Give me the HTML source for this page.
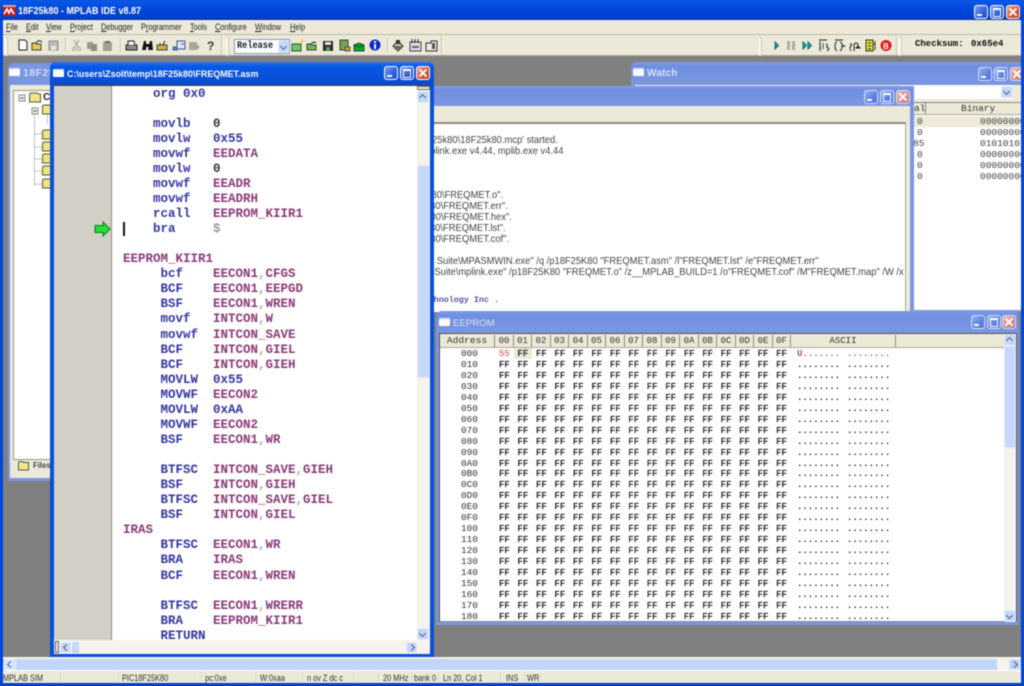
<!DOCTYPE html>
<html><head><meta charset="utf-8"><title>MPLAB IDE</title>
<style>
html,body{margin:0;padding:0;width:1024px;height:686px;overflow:hidden;background:#0048dc}
#root{position:relative;width:1024px;height:686px;overflow:hidden;background:#808080;font-family:"Liberation Sans",sans-serif;filter:blur(.5px)}
.a{position:absolute;display:block}
pre{margin:0;position:absolute;font-family:"Liberation Mono",monospace}
pre i{font-style:normal;color:#8a3a78}
.t{position:absolute;white-space:nowrap}
.b{position:absolute;width:12px;height:12px;border-radius:3px;border:1px solid #fff;box-sizing:content-box;background:linear-gradient(135deg,#7d9ff0,#2f5fdc 60%,#2a52c8);overflow:hidden}
.b.i{background:linear-gradient(135deg,#9db5ef,#5d80e2 60%,#5577dc);border-color:#d3def8}
.b.c{background:linear-gradient(135deg,#f0a08a,#d8502f 60%,#c8401f)}
.b.c.i{background:linear-gradient(135deg,#ecb9b4,#d58a86 60%,#cc7c78)}
.b.mn::after{content:"";position:absolute;left:2px;bottom:2px;width:5px;height:2px;background:#fff}
.b.mx::after{content:"";position:absolute;left:2px;top:2px;width:6px;height:6px;border:1px solid #fff;border-top-width:2px}
.b.c::before,.b.c::after{content:"";position:absolute;left:1px;top:5px;width:10px;height:2px;background:#fff;transform:rotate(45deg)}
.b.c::after{transform:rotate(-45deg)}
.ti{position:absolute;width:11px;height:8px;background:#fff;border-top:2px solid #dfe8fb;border-radius:1px;box-sizing:border-box}
.arrow{position:absolute;background:#c4d6f9;border:1px solid #e7eefc;box-sizing:border-box;border-radius:2px}
.arrow::after{content:"";position:absolute;left:50%;top:50%;width:4px;height:4px;margin:-3px 0 0 -3px;border-left:1.500px solid #4d6185;border-top:1.500px solid #4d6185;box-sizing:content-box}
.up::after{transform:translateY(1px) rotate(45deg)}
.dn::after{transform:rotate(225deg)}
.lf::after{transform:translateX(1px) rotate(-45deg)}
.rt::after{transform:rotate(135deg)}
.sep{position:absolute;width:1px;background:#c4c1b0;border-right:1px solid #f8f7f0}
.grip{position:absolute;width:1px;background:#f5f3ea;border:1px solid #cfccbc;border-left-color:#fff;box-sizing:content-box}
.menu span{position:absolute;top:22px;font-size:8.8px;color:#222;line-height:11px;transform:scaleX(.83);transform-origin:left;white-space:nowrap}
.menu u{text-decoration:underline}
.st{position:absolute;top:673px;font-size:9.2px;color:#333;line-height:11px;white-space:nowrap;transform:scaleX(.8);transform-origin:left}
.ttl{position:absolute;color:#fff;font-weight:bold;white-space:nowrap;transform-origin:left}
.h{position:absolute;top:335px;height:12px;border-right:1px solid #8f8c7c;box-sizing:border-box;text-align:center;font:9px/12px "Liberation Mono",monospace;color:#333}
.o{position:absolute;white-space:nowrap;font-size:10.3px;line-height:11px;color:#444;text-align:right;transform:scaleX(.91);transform-origin:right}
</style></head><body><div id="root">

<!-- main frame -->
<div class="a" style="left:0;top:0;width:1024px;height:20px;background:linear-gradient(#0a5ae8 0,#0a55e4 10%,#0046d8 50%,#0040cc 85%,#0038b8)"></div>
<div class="a" style="left:0;top:20px;width:3px;height:666px;background:#0048dc"></div>
<div class="a" style="left:1021px;top:20px;width:3px;height:666px;background:#0048dc"></div>
<div class="a" style="left:0;top:683px;width:1024px;height:3px;background:#0040c8"></div>
<svg class="a" style="left:3px;top:5px" width="13" height="11" viewBox="0 0 13 11"><rect width="13" height="11" fill="#b82020"/><rect y="0" width="13" height="2" fill="#d8a0a0"/><path d="M1 9 L4 4 L6 8 L8 4 L11 9" stroke="#fff" stroke-width="1.600" fill="none"/></svg>
<div class="ttl" style="left:18px;top:5px;font-size:10px;line-height:13px;transform:scaleX(.9)">18F25k80 - MPLAB IDE v8.87</div>
<div class="b mn" style="left:974px;top:5px"></div>
<div class="b mx" style="left:990px;top:5px"></div>
<div class="b c" style="left:1006px;top:5px"></div>

<!-- menu -->
<div class="a" style="left:3px;top:20px;width:1018px;height:14px;background:#ece9d8"></div>
<div class="menu">
<span style="left:6px"><u>F</u>ile</span><span style="left:26px"><u>E</u>dit</span><span style="left:46px"><u>V</u>iew</span><span style="left:70px"><u>P</u>roject</span><span style="left:101px"><u>D</u>ebugger</span><span style="left:141px">P<u>r</u>ogrammer</span><span style="left:190px"><u>T</u>ools</span><span style="left:215px"><u>C</u>onfigure</span><span style="left:255px"><u>W</u>indow</span><span style="left:290px"><u>H</u>elp</span>
</div>
<!-- toolbar -->
<div class="a" style="left:3px;top:34px;width:1018px;height:22px;background:#ece9d8;border-top:1px solid #bcb9a8;border-bottom:1px solid #aca899;box-sizing:border-box"></div>
<div class="grip" style="left:5px;top:37px;height:17px"></div>
<div class="sep" style="left:65px;top:38px;height:14px"></div>
<div class="sep" style="left:120px;top:38px;height:14px"></div>
<div class="sep" style="left:221px;top:35px;height:20px"></div>
<div class="grip" style="left:226px;top:37px;height:17px"></div>
<div class="sep" style="left:387px;top:38px;height:14px"></div>
<div class="sep" style="left:441px;top:35px;height:20px"></div>
<div class="grip" style="left:759px;top:37px;height:17px"></div>
<div class="sep" style="left:896px;top:35px;height:20px"></div>
<div class="grip" style="left:899px;top:37px;height:17px"></div>
<div class="a" style="left:234px;top:39px;width:56px;height:15px;background:#fff;border:1px solid #7f9db9;box-sizing:border-box"></div>
<div class="t" style="left:237px;top:41px;font:bold 10px/12px 'Liberation Mono',monospace;color:#222;transform:scaleX(.86);transform-origin:left">Release</div>
<div class="arrow dn" style="left:278px;top:40px;width:11px;height:13px"></div>
<svg class="a" style="left:0;top:34px" width="1024" height="22" viewBox="0 34 1024 22">
<!-- new/open/save -->
<path d="M19 40h6l2 2v8h-8z" fill="#fff" stroke="#222"/>
<path d="M32 50v-7h3l1 1h5v6z" fill="#e6c84e" stroke="#444"/><path d="M36 43q3-4 6-1" stroke="#222" fill="none"/>
<rect x="49" y="41" width="9" height="9" fill="#bbb" stroke="#8f8f8f"/><rect x="51" y="46" width="5" height="4" fill="#ece9d8"/>
<!-- cut/copy/paste disabled -->
<path d="M74 40l4 7M79 40l-4 7" stroke="#a9a79a" stroke-width="1.200"/><circle cx="74" cy="49" r="1.600" fill="none" stroke="#a9a79a"/><circle cx="79" cy="49" r="1.600" fill="none" stroke="#a9a79a"/>
<rect x="87" y="42" width="6" height="7" fill="#9e9c90"/><rect x="91" y="44" width="6" height="7" fill="#8f8d81"/>
<rect x="103" y="42" width="9" height="9" fill="#a3a194"/><rect x="105" y="41" width="5" height="2" fill="#6f6e65"/>
<!-- print, find -->
<rect x="126" y="45" width="11" height="5" fill="#8a8a8a" stroke="#222"/><path d="M128 45v-4h6l1 4" fill="#eee" stroke="#222"/>
<path d="M142 50l2-9h2v9zM148 50l2-9h2l1 9z" fill="#111"/><rect x="145" y="44" width="5" height="3" fill="#111"/>
<path d="M157 50v-5h10v5z" fill="#c9b13c" stroke="#444"/><path d="M163 45l2-4M160 45v-2" stroke="#222"/>
<rect x="177" y="41" width="8" height="8" fill="#dfe6f2" stroke="#3a5a8a"/><path d="M173 47h4v3h-4zM181 44h3" stroke="#3a5a8a" fill="#5a8ac0"/>
<rect x="189" y="42" width="8" height="8" fill="#a9a79a"/><path d="M197 44l3 3-3 3z" fill="#a9a79a"/>
<text x="207" y="50" font-family="Liberation Sans" font-weight="bold" font-size="12" fill="#3c3c1c">?</text>
<!-- project -->
<rect x="292" y="44" width="9" height="7" fill="#6fc46a" stroke="#2d5a2d"/><path d="M302 39v5M300 41h5" stroke="#e8d040"/>
<path d="M307 50v-6h3l1 1h5v5z" fill="#78b060" stroke="#2f4f2f"/><path d="M311 44q3-3 5-1" stroke="#222" fill="none"/>
<rect x="323" y="41" width="10" height="10" fill="#2b2b2b"/><rect x="325" y="42" width="6" height="3" fill="#ddd"/><rect x="326" y="47" width="4" height="4" fill="#5a9a5a"/>
<rect x="340" y="40" width="8" height="10" fill="#7aa05a" stroke="#2f4f2f"/><path d="M345 47h5v4h-5z" fill="#c9a020" stroke="#555"/>
<path d="M354 45l5-2 5 2v6h-10z" fill="#12a030" stroke="#0d5520"/><path d="M354 45l5 2 5-2" stroke="#0d5520" fill="none"/>
<circle cx="375" cy="45" r="5.500" fill="#0a28c8"/><rect x="374" y="44" width="2" height="5" fill="#fff"/><rect x="374" y="41" width="2" height="2" fill="#fff"/>
<path d="M393 46l5-5 5 5-5 5z" fill="#c8c5b8" stroke="#333"/><path d="M396 40h4v4h-4z" fill="#333"/><rect x="394" y="46" width="8" height="3" fill="#666"/>
<rect x="410" y="42" width="11" height="9" fill="#dadbe8" stroke="#444"/><path d="M412 39v4M415 39v4M418 39v4" stroke="#333"/><rect x="412" y="46" width="7" height="2" fill="#666"/>
<path d="M426 43h5v-2h6v10h-11z" fill="#e8e8e8" stroke="#333"/><rect x="432" y="43" width="3" height="6" fill="#555"/>
<!-- debug -->
<path d="M775 42l3.500 3.500-3.500 3.500z" fill="#1fa8a0" stroke="#0f6a70"/>
<rect x="787" y="41" width="3" height="9" fill="#b0aea2"/><rect x="792" y="41" width="3" height="9" fill="#b0aea2"/>
<path d="M803 42l3.500 3.500-3.500 3.500zM808 42l3.500 3.500-3.500 3.500z" fill="#1fa8a0" stroke="#0f6a70"/>
<g fill="none" stroke="#222"><path d="M819 40h8M821 42q-2 0-1 3t-1 3q2 0 1 3M826 44q2 1 1 2t1 2-1 3"/><path d="M823 43v6" stroke="#0f6a70"/>
<path d="M835 40h8M837 42q-2 0-2 4t2 5M840 42q2 0 2 4t-2 5"/><path d="M842 46h3" stroke="#0f6a70" stroke-width="2"/>
<path d="M851 51q-2-3 0-5t-1-2M854 51v-4q0-4 2-4t2 3"/><path d="M858 46l2 2-4 0z" fill="#0f6a70"/></g>
<rect x="866" y="40" width="7" height="11" fill="#e8e020" stroke="#333"/><path d="M868 43h3M868 46h3M868 49h3" stroke="#333"/><path d="M873 44h2M875 41v9" stroke="#333"/>
<circle cx="886" cy="45.500" r="5.500" fill="#e01818"/><text x="883" y="49" font-family="Liberation Sans" font-weight="bold" font-size="8" fill="#fff">B</text>
</svg>
<div class="t" style="left:915px;top:38px;font:bold 9px/13px 'Liberation Mono',monospace;color:#111">Checksum:</div>
<div class="t" style="left:971px;top:38px;font:bold 9px/13px 'Liberation Mono',monospace;color:#111">0x65e4</div>

<!-- watch window -->
<div class="a" style="left:631px;top:62px;width:392px;height:250px;background:#7a96df;border-radius:6px 6px 0 0"></div>
<div class="a" style="left:631px;top:62px;width:392px;height:23px;background:linear-gradient(#7d9ce6,#6f8fe0 20%,#7b97e0);border-radius:6px 6px 0 0"></div>
<div class="ti" style="left:633px;top:68px"></div>
<div class="ttl" style="left:647px;top:67px;font-size:10px;line-height:13px;color:#d8e2f8;letter-spacing:.2px">Watch</div>
<div class="b mn i" style="left:978px;top:67px"></div>
<div class="b mx i" style="left:994px;top:67px"></div>
<div class="b c i" style="left:1010px;top:67px"></div>
<div class="a" style="left:1021px;top:62px;width:3px;height:260px;background:#0048dc"></div>
<div class="a" style="left:635px;top:85px;width:386px;height:225px;background:#ece9d8"></div>
<div class="a" style="left:900px;top:85px;width:113px;height:14px;background:#fff"></div>
<div class="arrow dn" style="left:1001px;top:86px;width:12px;height:12px"></div>
<div class="a" style="left:905px;top:102px;width:116px;height:208px;background:#fff;border-top:1px solid #888;box-sizing:border-box"></div>
<div class="a" style="left:905px;top:103px;width:116px;height:12px;background:#ece9d8;border-bottom:1px solid #aca899;box-sizing:border-box"></div>
<div class="a" style="left:925px;top:103px;width:1px;height:12px;background:#8f8c7c"></div>
<div class="t" style="left:914px;top:103px;font:9.5px/12px 'Liberation Mono',monospace;color:#333">al</div>
<div class="t" style="left:961px;top:103px;font:9.5px/12px 'Liberation Mono',monospace;color:#333">Binary</div>
<div class="a" style="left:905px;top:116px;width:116px;height:11px;background:#ece9d8"></div>
<pre style="left:917px;top:116px;font-size:9.5px;line-height:11px;color:#444">0
0
<span style="margin-left:-4px">85</span>
0
0
0</pre>
<pre style="left:980px;top:116px;font-size:9.5px;line-height:11px;color:#444;width:41px;overflow:hidden">00000000
00000000
0101010
00000000
00000000
00000000</pre>

<!-- output window -->
<div class="a" style="left:420px;top:86px;width:494px;height:226px;background:#7a96df;border-radius:0 6px 0 0"></div>
<div class="a" style="left:420px;top:86px;width:494px;height:20px;background:linear-gradient(#7d9ce6,#6f8fe0 20%,#7b97e0)"></div>
<div class="b mn i" style="left:864px;top:90px"></div>
<div class="b mx i" style="left:880px;top:90px"></div>
<div class="b c i" style="left:896px;top:90px"></div>
<div class="a" style="left:424px;top:106px;width:486px;height:206px;background:#ece9d8"></div>
<div class="a" style="left:424px;top:122px;width:482px;height:190px;background:#fff;border-top:2px solid #8f8c7c;border-right:1px solid #aca899;box-sizing:border-box"></div>
<div class="o" style="right:466px;top:135px">Build C:\users\Zsolt\temp\18F25k80\18F25k80.mcp' started.</div>
<div class="o" style="right:461px;top:146px">Language tool versions: mpasmx.exe v5.46, mplink.exe v4.44, mplib.exe v4.44</div>
<div class="o" style="right:521px;top:190px">C:\users\Zsolt\temp\18F25k80\FREQMET.o".</div>
<div class="o" style="right:516px;top:201px">C:\users\Zsolt\temp\18F25k80\FREQMET.err".</div>
<div class="o" style="right:512px;top:212px">C:\users\Zsolt\temp\18F25k80\FREQMET.hex".</div>
<div class="o" style="right:518px;top:223px">C:\users\Zsolt\temp\18F25k80\FREQMET.lst".</div>
<div class="o" style="right:515px;top:234px">C:\users\Zsolt\temp\18F25k80\FREQMET.cof".</div>
<div class="o" style="right:205px;top:255.500px">Suite\MPASMWIN.exe" /q /p18F25K80 "FREQMET.asm" /l"FREQMET.lst" /e"FREQMET.err"</div>
<div class="o" style="right:120px;top:266.500px">Suite\mplink.exe" /p18F25K80 "FREQMET.o" /z__MPLAB_BUILD=1 /o"FREQMET.cof" /M"FREQMET.map" /W /x</div>
<div class="t" style="right:525px;top:294px;font:bold 8.4px/12px 'Liberation Mono',monospace;color:#5555a8">Microchip Technology Inc .</div>

<!-- project window -->
<div class="a" style="left:8px;top:63px;width:60px;height:418px;background:#7a96df;border-radius:6px 6px 0 0"></div>
<div class="ti" style="left:9px;top:68px"></div>
<div class="ttl" style="left:23px;top:67px;font-size:10.5px;line-height:13px;color:#d0dcf6;letter-spacing:.4px">18F25k80.mcw</div>
<div class="a" style="left:10px;top:85px;width:58px;height:393px;background:#ece9d8"></div>
<div class="a" style="left:13px;top:90px;width:50px;height:370px;background:#fff;border:1px solid #9a978a;box-sizing:border-box"></div>
<svg class="a" style="left:13px;top:90px" width="40" height="110" viewBox="13 90 40 110">
<rect x="19" y="95" width="6" height="6" fill="#eee" stroke="#888"/><path d="M20.500 98h3" stroke="#444"/>
<rect x="32" y="108" width="6" height="6" fill="#eee" stroke="#888"/><path d="M33.500 111h3" stroke="#444"/>
<path d="M34.500 114v72M34.500 134h8M34.500 147h8M34.500 159h8M34.500 171h8M34.500 184h8M47.500 115v9" stroke="#888" stroke-dasharray="1 1" fill="none"/>
<path d="M29.500 102v-7q0-2 2-2h6l1 1h2v8z" fill="#f0e480" stroke="#5a5a30"/>
<path d="M42.500 114v-7q0-2 2-2h6v9z" fill="#f0e480" stroke="#5a5a30"/>
<path d="M42.500 139v-7q0-2 2-2h6v9zM42.500 151v-7q0-2 2-2h6v9zM42.500 163v-7q0-2 2-2h6v9zM42.500 175v-7q0-2 2-2h6v9zM42.500 188v-7q0-2 2-2h6v9z" fill="#f0e480" stroke="#5a5a30"/>
</svg>
<div class="t" style="left:43px;top:92px;font:bold 10px/12px 'Liberation Sans',sans-serif;color:#222">C</div>
<svg class="a" style="left:18px;top:459px" width="12" height="13" viewBox="0 0 12 13"><path d="M.5 11V3.500q0-1 1-1h3l1 1h5v7.500z" fill="#f2e682" stroke="#555"/></svg>
<div class="t" style="left:33px;top:460px;font:bold 8.6px/11px 'Liberation Sans',sans-serif;color:#444;transform:scaleX(.9);transform-origin:left">Files</div>

<!-- EEPROM window -->
<div class="a" style="left:436px;top:311px;width:583px;height:314px;background:#7a96df;border-radius:6px 6px 0 0"></div>
<div class="a" style="left:436px;top:311px;width:583px;height:22px;background:linear-gradient(#7d9ce6,#6f8fe0 20%,#7b97e0);border-radius:6px 6px 0 0"></div>
<div class="ti" style="left:439px;top:318px"></div>
<div class="ttl" style="left:453px;top:317px;font-size:9.6px;line-height:13px;color:#d8e2f8;font-weight:normal">EEPROM</div>
<div class="b mn i" style="left:971px;top:315px"></div>
<div class="b mx i" style="left:987px;top:315px"></div>
<div class="b c i" style="left:1002px;top:315px"></div>
<div class="a" style="left:439px;top:333px;width:578px;height:289px;background:#fff;border:1px solid #555;border-bottom-color:#888;box-sizing:border-box"></div>
<div class="a" style="left:440px;top:334px;width:564px;height:14px;background:#ece9d8;border-bottom:1px solid #aca899;box-sizing:border-box"></div>
<div class="h" style="left:440px;width:55px;font-size:9.6px">Address</div>
<div class="h" style="left:495px;width:19px">00</div><div class="h" style="left:514px;width:18px">01</div><div class="h" style="left:532px;width:19px">02</div><div class="h" style="left:551px;width:18px">03</div><div class="h" style="left:569px;width:19px">04</div><div class="h" style="left:588px;width:18px">05</div><div class="h" style="left:606px;width:19px">06</div><div class="h" style="left:625px;width:18px">07</div><div class="h" style="left:643px;width:19px">08</div><div class="h" style="left:662px;width:18px">09</div><div class="h" style="left:680px;width:19px">0A</div><div class="h" style="left:699px;width:18px">0B</div><div class="h" style="left:717px;width:19px">0C</div><div class="h" style="left:736px;width:18px">0D</div><div class="h" style="left:754px;width:19px">0E</div><div class="h" style="left:773px;width:18px">0F</div>
<div class="h" style="left:791px;width:105px">ASCII</div>
<div class="a" style="left:514px;top:348px;width:18px;height:11px;background:#ece9d8"></div>
<pre style="left:461px;top:349px;font-size:9.4px;line-height:10.96px;color:#333">000
010
020
030
040
050
060
070
080
090
0A0
0B0
0C0
0D0
0E0
0F0
100
110
120
130
140
150
160
170
180</pre>
<pre style="left:499px;top:349px;font-size:9px;line-height:10.96px;color:#111;word-spacing:2.27px;-webkit-text-stroke:.2px #111"><span style="color:#c04040;-webkit-text-stroke:0">55</span> FF FF FF FF FF FF FF FF FF FF FF FF FF FF FF
FF FF FF FF FF FF FF FF FF FF FF FF FF FF FF FF
FF FF FF FF FF FF FF FF FF FF FF FF FF FF FF FF
FF FF FF FF FF FF FF FF FF FF FF FF FF FF FF FF
FF FF FF FF FF FF FF FF FF FF FF FF FF FF FF FF
FF FF FF FF FF FF FF FF FF FF FF FF FF FF FF FF
FF FF FF FF FF FF FF FF FF FF FF FF FF FF FF FF
FF FF FF FF FF FF FF FF FF FF FF FF FF FF FF FF
FF FF FF FF FF FF FF FF FF FF FF FF FF FF FF FF
FF FF FF FF FF FF FF FF FF FF FF FF FF FF FF FF
FF FF FF FF FF FF FF FF FF FF FF FF FF FF FF FF
FF FF FF FF FF FF FF FF FF FF FF FF FF FF FF FF
FF FF FF FF FF FF FF FF FF FF FF FF FF FF FF FF
FF FF FF FF FF FF FF FF FF FF FF FF FF FF FF FF
FF FF FF FF FF FF FF FF FF FF FF FF FF FF FF FF
FF FF FF FF FF FF FF FF FF FF FF FF FF FF FF FF
FF FF FF FF FF FF FF FF FF FF FF FF FF FF FF FF
FF FF FF FF FF FF FF FF FF FF FF FF FF FF FF FF
FF FF FF FF FF FF FF FF FF FF FF FF FF FF FF FF
FF FF FF FF FF FF FF FF FF FF FF FF FF FF FF FF
FF FF FF FF FF FF FF FF FF FF FF FF FF FF FF FF
FF FF FF FF FF FF FF FF FF FF FF FF FF FF FF FF
FF FF FF FF FF FF FF FF FF FF FF FF FF FF FF FF
FF FF FF FF FF FF FF FF FF FF FF FF FF FF FF FF
FF FF FF FF FF FF FF FF FF FF FF FF FF FF FF FF</pre>
<pre style="left:797px;top:349px;font-size:9px;line-height:10.96px;color:#111;word-spacing:1.4px;font-weight:bold"><span style="color:#b05050">U....... ........</span>
........ ........
........ ........
........ ........
........ ........
........ ........
........ ........
........ ........
........ ........
........ ........
........ ........
........ ........
........ ........
........ ........
........ ........
........ ........
........ ........
........ ........
........ ........
........ ........
........ ........
........ ........
........ ........
........ ........
........ ........</pre>
<div class="a" style="left:1004px;top:334px;width:12px;height:287px;background:#f4f3ec"></div>
<div class="a" style="left:1004px;top:346px;width:12px;height:102px;background:#c6d7fa;border:1px solid #e3ebfc;box-sizing:border-box"></div>
<div class="arrow up" style="left:1004px;top:334px;width:12px;height:12px"></div>
<div class="arrow dn" style="left:1004px;top:610px;width:12px;height:12px"></div>

<!-- source window -->
<div class="a" style="left:50px;top:62px;width:384px;height:595px;background:#0a4fd8;border-radius:6px 6px 0 0"></div>
<div class="a" style="left:50px;top:62px;width:384px;height:23px;background:linear-gradient(#2a72f0,#0858e4 20%,#0a50d8 75%,#0a4ac8);border-radius:6px 6px 0 0"></div>
<div class="ti" style="left:53px;top:69px"></div>
<div class="ttl" style="left:67px;top:68px;font-size:9.6px;line-height:13px;transform:scaleX(.93)">C:\users\Zsolt\temp\18F25k80\FREQMET.asm</div>
<div class="b mn" style="left:384px;top:66px"></div>
<div class="b mx" style="left:400px;top:66px"></div>
<div class="b c" style="left:416px;top:66px"></div>
<div class="a" style="left:54px;top:85px;width:376px;height:569px;background:#fff;border-top:1px solid #444;box-sizing:border-box"></div>
<div class="a" style="left:54px;top:86px;width:57px;height:554px;background:#d2cfc7"></div>
<div class="a" style="left:111px;top:86px;width:1px;height:554px;background:#8f8c84"></div>
<svg class="a" style="left:94px;top:221px" width="17" height="16" viewBox="0 0 17 16"><path d="M1 4.500h8V1l7 7-7 7v-3.500H1z" fill="#22e030" stroke="#0c7a18"/></svg>
<div class="a" style="left:123px;top:222px;width:1.500px;height:14px;background:#111"></div>
<pre style="left:123px;top:86.500px;font-size:12.5px;line-height:15.06px;font-weight:bold;color:#3636a0">    org 0x0

    movlb   <span style="color:#333">0</span>
    movlw   0x55
    movwf   <i>EEDATA</i>
    movlw   <span style="color:#333">0</span>
    movwf   <i>EEADR</i>
    movwf   <i>EEADRH</i>
    rcall   <i>EEPROM_KIIR1</i>
    bra     <span style="color:#999">$</span>

<i>EEPROM_KIIR1</i>
     bcf    <i>EECON1</i><span style="color:#aaa">,</span><i>CFGS</i>
     BCF    <i>EECON1</i><span style="color:#aaa">,</span><i>EEPGD</i>
     BSF    <i>EECON1</i><span style="color:#aaa">,</span><i>WREN</i>
     movf   <i>INTCON</i><span style="color:#aaa">,</span><i>W</i>
     movwf  <i>INTCON_SAVE</i>
     BCF    <i>INTCON</i><span style="color:#aaa">,</span><i>GIEL</i>
     BCF    <i>INTCON</i><span style="color:#aaa">,</span><i>GIEH</i>
     MOVLW  0x55
     MOVWF  <i>EECON2</i>
     MOVLW  0xAA
     MOVWF  <i>EECON2</i>
     BSF    <i>EECON1</i><span style="color:#aaa">,</span><i>WR</i>

     BTFSC  <i>INTCON_SAVE</i><span style="color:#aaa">,</span><i>GIEH</i>
     BSF    <i>INTCON</i><span style="color:#aaa">,</span><i>GIEH</i>
     BTFSC  <i>INTCON_SAVE</i><span style="color:#aaa">,</span><i>GIEL</i>
     BSF    <i>INTCON</i><span style="color:#aaa">,</span><i>GIEL</i>
<i>IRAS</i>
     BTFSC  <i>EECON1</i><span style="color:#aaa">,</span><i>WR</i>
     BRA    <i>IRAS</i>
     BCF    <i>EECON1</i><span style="color:#aaa">,</span><i>WREN</i>

     BTFSC  <i>EECON1</i><span style="color:#aaa">,</span><i>WRERR</i>
     BRA    <i>EEPROM_KIIR1</i>
     RETURN</pre>
<div class="a" style="left:417px;top:86px;width:13px;height:554px;background:#f4f3ec"></div>
<div class="a" style="left:417px;top:86px;width:13px;height:4px;background:#ece9d8;border:1px solid #777;box-sizing:border-box"></div>
<div class="a" style="left:417px;top:165px;width:13px;height:213px;background:#c6d7fa;border:1px solid #e3ebfc;box-sizing:border-box"></div>
<div class="arrow up" style="left:417px;top:91px;width:12px;height:12px"></div>
<div class="arrow dn" style="left:417px;top:628px;width:12px;height:12px"></div>
<div class="a" style="left:54px;top:640px;width:376px;height:14px;background:#f4f3ec"></div>
<div class="a" style="left:55px;top:641px;width:4px;height:12px;background:#ece9d8;border:1px solid #666;box-sizing:border-box"></div>
<div class="arrow lf" style="left:60px;top:642px;width:11px;height:11px"></div>
<div class="a" style="left:72px;top:642px;width:7px;height:11px;background:#c6d7fa"></div>
<div class="arrow rt" style="left:406px;top:642px;width:11px;height:11px"></div>

<!-- bottom scrollbar -->
<div class="a" style="left:3px;top:657px;width:1018px;height:2px;background:#f5f3ea"></div>
<div class="a" style="left:3px;top:659px;width:1018px;height:11px;background:#c3d6fa"></div>
<div class="a" style="left:997px;top:659px;width:12px;height:11px;background:#f4f3ec"></div>
<div class="arrow lf" style="left:4px;top:659px;width:12px;height:11px;background:#d6e2fa"></div>
<div class="arrow rt" style="left:1009px;top:659px;width:11px;height:11px;background:#b9cdf7"></div>

<!-- status bar -->
<div class="a" style="left:3px;top:670px;width:1018px;height:13px;background:#ece9d8;border-top:1px solid #fff;box-sizing:border-box"></div>
<div class="st" style="left:3px">MPLAB SIM</div>
<div class="st" style="left:122px">PIC18F25K80</div>
<div class="st" style="left:205px">pc:0xe</div>
<div class="st" style="left:260px">W:0xaa</div>
<div class="st" style="left:307px">n ov Z dc c</div>
<div class="st" style="left:383px">20 MHz</div>
<div class="st" style="left:414px">bank 0</div>
<div class="st" style="left:443px">Ln 20, Col 1</div>
<div class="st" style="left:506px">INS</div>
<div class="st" style="left:527px">WR</div>
<div class="a" style="left:60px;top:672px;width:1px;height:10px;background:#dcd9c9"></div>
<div class="a" style="left:118px;top:672px;width:1px;height:10px;background:#dcd9c9"></div>
<div class="a" style="left:200px;top:672px;width:1px;height:10px;background:#dcd9c9"></div>
<div class="a" style="left:255px;top:672px;width:1px;height:10px;background:#dcd9c9"></div>
<div class="a" style="left:302px;top:672px;width:1px;height:10px;background:#dcd9c9"></div>
<div class="a" style="left:353px;top:672px;width:1px;height:10px;background:#dcd9c9"></div>
<div class="a" style="left:378px;top:672px;width:1px;height:10px;background:#dcd9c9"></div>
<div class="a" style="left:411px;top:672px;width:1px;height:10px;background:#dcd9c9"></div>
<div class="a" style="left:438px;top:672px;width:1px;height:10px;background:#dcd9c9"></div>
<div class="a" style="left:500px;top:672px;width:1px;height:10px;background:#dcd9c9"></div>
<div class="a" style="left:524px;top:672px;width:1px;height:10px;background:#dcd9c9"></div>
<div class="a" style="left:540px;top:672px;width:1px;height:10px;background:#dcd9c9"></div>
</div></body></html>
